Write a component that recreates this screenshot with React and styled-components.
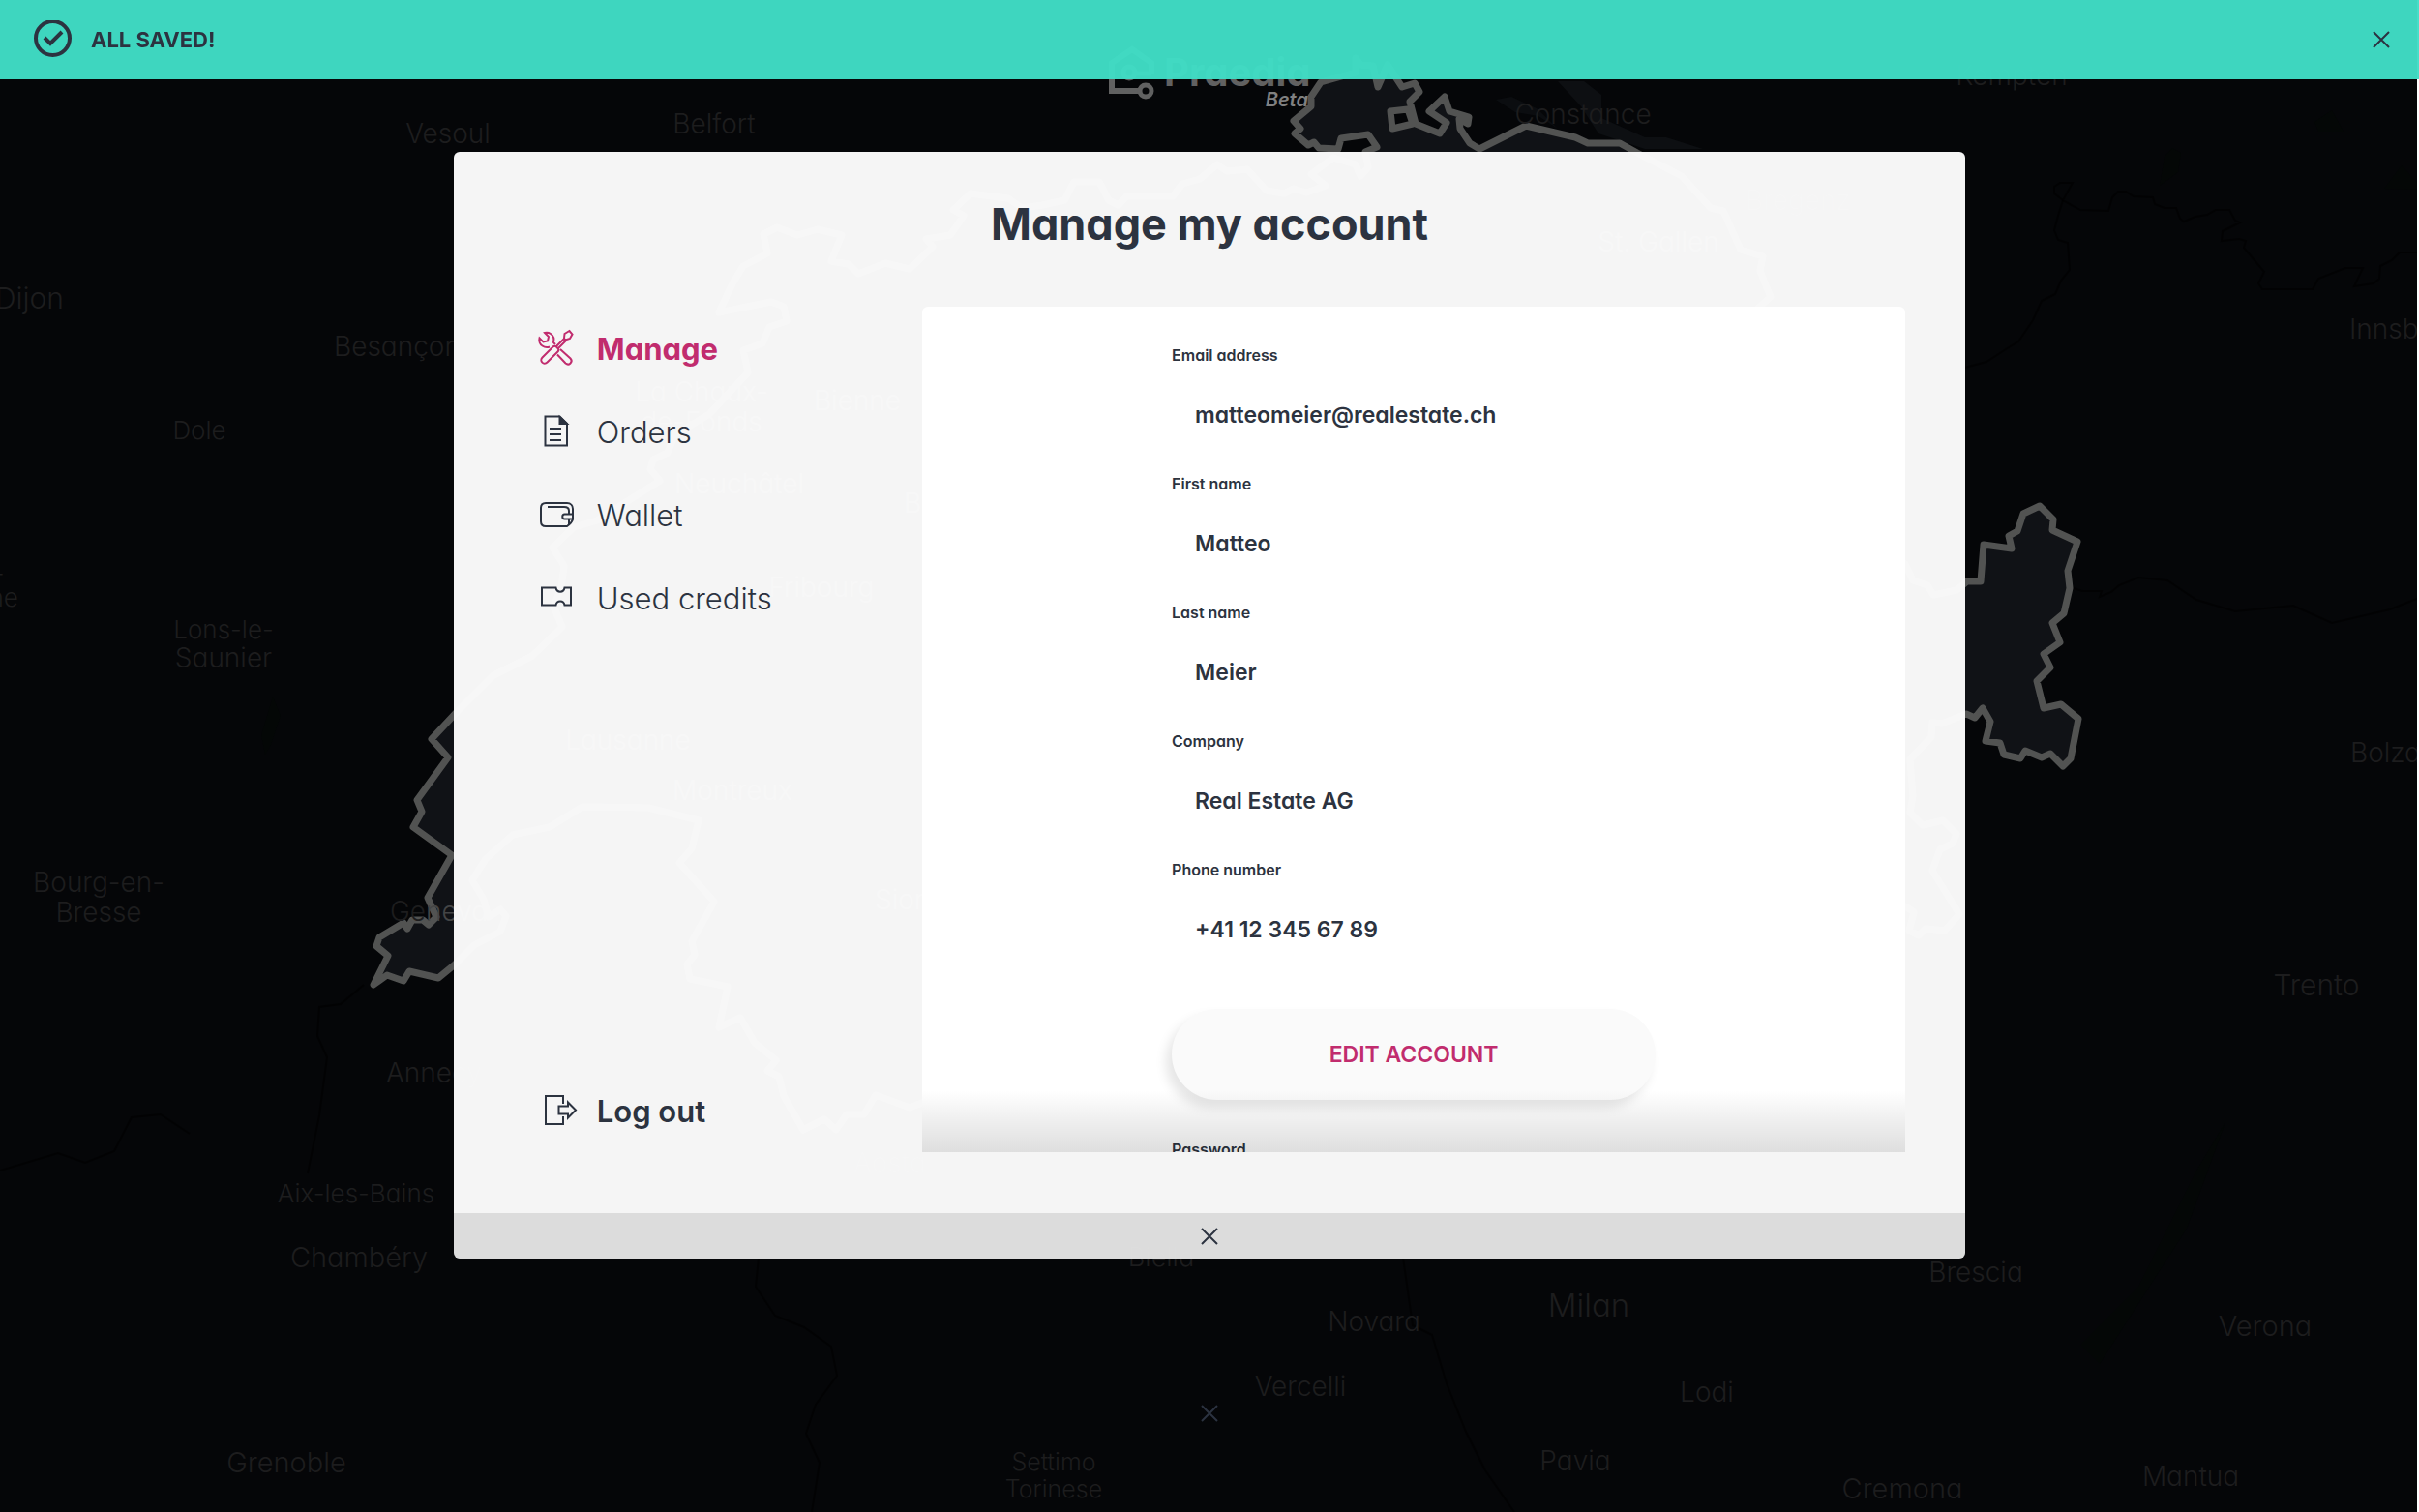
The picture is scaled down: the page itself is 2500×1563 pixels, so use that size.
import React, { useState } from "react";
import styled, { createGlobalStyle, css } from "styled-components";

const FIELDS = [
  { id: "email", label: "Email address", type: "email", value: "matteomeier@realestate.ch" },
  { id: "firstName", label: "First name", type: "text", value: "Matteo" },
  { id: "lastName", label: "Last name", type: "text", value: "Meier" },
  { id: "company", label: "Company", type: "text", value: "Real Estate AG" },
  { id: "phone", label: "Phone number", type: "tel", value: "+41 12 345 67 89" },
];

// [name, x, y, anchor, size]
const CITIES = [
  ["Vesoul", 463, 148],
  ["Belfort", 738, 138],
  ["Constance", 1636, 128],
  ["Kempten", 2079, 88],
  ["Dijon", 66, 319, "end", 30],
  ["Besançon", 345, 368, "start"],
  ["Dole", 206, 454, "middle", 26],
  ["sur-", -20, 602, "middle", 26],
  ["Saône", -20, 627, "middle", 26],
  ["Lons-le-", 231, 660, "middle", 26],
  ["Saunier", 231, 690],
  ["Bourg-en-", 102, 922],
  ["Bresse", 102, 953],
  ["Annecy", 399, 1119, "start"],
  ["Aix-les-Bains", 368, 1243, "middle", 26],
  ["Chambéry", 371, 1310, "middle", 29],
  ["Grenoble", 296, 1522, "middle", 29],
  ["Biella", 1200, 1309, "middle", 27],
  ["Novara", 1420, 1376],
  ["Milan", 1642, 1361, "middle", 33],
  ["Vercelli", 1344, 1443],
  ["Lodi", 1764, 1449],
  ["Pavia", 1628, 1520],
  ["Settimo", 1089, 1520, "middle", 25],
  ["Torinese", 1089, 1548, "middle", 25],
  ["Cremona", 1966, 1549, "middle", 29],
  ["Mantua", 2264, 1536],
  ["Verona", 2341, 1381, "middle", 29],
  ["Brescia", 2042, 1325],
  ["Trento", 2394, 1029, "middle", 30],
  ["Bolzano", 2429, 788, "start"],
  ["Innsbruck", 2428, 350, "start"],
  ["Bregenz", 1804, 217, "start"],
  ["Aosta", 882, 1212, "start"],
];

const SWISS_CITIES = [
  ["La Chaux-", 725, 415],
  ["de-Fonds", 725, 446],
  ["Bienne", 886, 424],
  ["Neuchâtel", 764, 510],
  ["Bern", 934, 530, "start"],
  ["Fribourg", 849, 617],
  ["Lausanne", 649, 775],
  ["Montreux", 757, 827],
  ["Sion", 904, 940, "start"],
  ["St. Gallen", 1714, 260],
];

const SWISS_BORDER =
  "386,1018 401,988 389,978 392,969 417,954 421,960 426,951 437,951 443,956 451,948 442,928 467,884 427,855 436,839 431,827 463,783 446,764 473,735 510,698 550,678 581,648 572,627 580,607 583,585 571,566 593,545 617,538 650,517 682,497 672,485 675,475 690,468 697,450 733,428 773,385 768,362 788,355 795,338 813,332 810,317 797,312 743,323 757,293 768,275 793,262 789,242 803,235 824,243 845,237 870,243 859,270 877,273 887,283 915,272 940,278 964,255 957,247 982,243 996,223 985,217 1003,200 1042,205 1056,215 1077,212 1100,207 1110,188 1136,188 1146,207 1156,212 1164,203 1212,203 1222,190 1240,185 1258,170 1268,177 1289,175 1309,197 1327,200 1337,195 1350,199 1370,192 1355,180 1378,163 1401,170 1406,182 1414,173 1411,157 1423,152 1414,139 1386,143 1383,154 1363,153 1358,147 1352,150 1338,138 1344,133 1337,125 1355,110 1355,100 1365,85 1401,75 1401,60 1406,67 1419,68 1424,90 1434,67 1449,90 1462,86 1467,95 1457,105 1463,128 1488,138 1495,127 1477,115 1493,100 1498,115 1518,121 1517,128 1508,123 1509,133 1519,148 1529,154 1577,130 1628,142 1641,148 1674,148 1692,158 1738,182 1768,215 1781,218 1799,258 1822,265 1819,280 1830,307 1804,330 1830,480 1900,540 1969,583 1977,600 1992,605 1998,615 2022,610 2033,601 2047,601 2050,563 2079,567 2076,554 2085,549 2091,531 2108,523 2122,537 2121,548 2147,560 2137,590 2139,608 2133,634 2121,644 2129,664 2112,676 2119,690 2105,704 2112,732 2130,728 2148,743 2140,784 2132,792 2119,779 2110,783 2093,776 2088,784 2071,780 2067,768 2052,766 2057,746 2049,732 2041,742 2032,738 2007,748 1997,747 1996,762 1974,785 1977,823 1974,840 1987,853 2008,848 2022,862 2018,872 2005,878 1997,900 2025,945 2010,962 1990,960 1983,967 1973,962 1978,943 1969,937 1800,850 1650,880 1500,1100 1300,900 1100,1080 953,1140 940,1145 905,1132 893,1152 875,1152 864,1168 852,1157 830,1168 810,1133 805,1113 793,1107 802,1096 780,1078 765,1052 743,1062 752,1020 713,1012 710,997 718,987 715,973 738,932 702,892 715,877 722,848 670,835 602,834 568,855 530,863 502,888 488,910 500,930 505,948 517,940 523,947 517,963 490,977 470,997 453,1011 423,1004 417,1014 400,1008";

function SwissMap() {
  return (
    <MapSvg viewBox="0 0 2498 1563" preserveAspectRatio="xMidYMin slice" aria-hidden="true">
      <g fill="none" stroke="#000000" strokeOpacity="0.6" strokeWidth="2">
        <path d="M2132 207l-9-7 0-7 6-4h13l-10 18 18 10 29 1 4-14 6-6h8l8 5 20 1 2 7 10 4h12l4 11 4 3 12-5 12-2 9-5h14l6 11 5 2-18 9-1 10 18-2 7 2-2 7 21 25-6 12 4 6h52l6-11 28-11h18l-9 19 20-3 6-5 1-13 12-6 8-8h20" />
        <path d="M2132 207l-5 16-4 15 4 10 10 3 2 28-9 11-6 14-14 7-9 20-15 22-13 8-20 13-30 8" />
        <path d="M2140 607l12 4h20l-2 6 12-5 8-7 20-8 30 3 30 20 40 12 60-6 40 18 60-14 30-12" />
        <path d="M784 1300l-3 30 20 30 30 12 28 20 6 30-22 30-10 30 14 30-8 51" />
        <path d="M1450 1300l10 70 20 10 15 50 20 50 20 40 30 43" />
        <path d="M0 1210l60-18 28 10 30-12 18-35 30-3 30 20" />
        <path d="M376 1018l-24 20-22 3-2 30 10 22-8 60-12 60" />
      </g>
      <g fill="#040706">
        <path d="M2232 192l5-30 8-9 9 5-3 20-8 6z" />
        <path d="M2396 136l-4-10 18-12 12 22z" />
        <path d="M2150 1390l60-60 60-120 30-50-40 110-90 140z" />
        <path d="M2464 195l18-24 16 18v7z" />
        <path d="M282 720l8 20-10 30-6 10-4-20z" />
      </g>
      <polygon points={SWISS_BORDER} fill="#101216" />
      <path fill="#0d0f12" d="M1610 84h27l18 14v24l45 20h22l38 12h-60l-48-16-18-28z" />
      <path fill="#0b0d10" d="M1546 103l16-3 26 12 22 21-20-13-24-4z" />
      <g fill="none" stroke="#525352" strokeWidth="7" strokeLinejoin="round">
        <polygon points={SWISS_BORDER} />
        <polygon points="1437,115 1455,113 1460,128 1439,133" fill="#050608" />
      </g>
      <MapLabels>
        {CITIES.map(([name, x, y, anchor = "middle", size = 28]) => (
          <text key={name} x={x} y={y} textAnchor={anchor} fontSize={size}>
            {name}
          </text>
        ))}
      </MapLabels>
      <MapLabels $bright>
        {SWISS_CITIES.map(([name, x, y, anchor = "middle", size = 28]) => (
          <text key={name} x={x} y={y} textAnchor={anchor} fontSize={size}>
            {name}
          </text>
        ))}
      </MapLabels>
      <MapLabels>
        <text x="403" y="952" fontSize="28">
          Ge<tspan fill="#444546">neva</tspan>
        </text>
      </MapLabels>
      <g fill="none" stroke="#616161" strokeWidth="6">
        <path d="M1190 77V65l-20-14-21 14v29h28" />
        <circle cx="1184" cy="94" r="6" strokeWidth="5" />
        <circle cx="1167" cy="75" r="6" strokeWidth="5" />
        <path d="M1173 76h17" strokeWidth="5" />
      </g>
      <BrandName x="1203" y="89">
        Praedia
      </BrandName>
      <BrandTag x="1352" y="110">
        Beta
      </BrandTag>
    </MapSvg>
  );
}

function CrossIcon() {
  return (
    <svg width="18" height="18" viewBox="0 0 18 18" fill="none" stroke="currentColor" strokeWidth="2">
      <path d="M1 1l16 16M17 1L1 17" />
    </svg>
  );
}

function CheckIcon() {
  return (
    <svg width="40" height="40" viewBox="0 0 40 40" fill="none" stroke="currentColor" strokeWidth="4">
      <circle cx="20.500" cy="18.500" r="17.5" />
      <path d="M12 18l6 6 12-12" />
    </svg>
  );
}

function ToolsIcon() {
  return (
    <IconSvg viewBox="0 0 40 40">
      <path d="M20 18l8.500-8.500M22 20l8.500-8.500M28 9.500l.5-4.500 5-3 3 3.500-2.500 4.500-5 1.500z" />
      <path d="M20 18.500c-1-1-2.500-1-3.500 0L5.500 29.500c-3.500 3.500 1.500 8.500 5 5L21.500 23.500c1-1 1-2.500 0-3.500z" />
      <path d="M19 16l-2-2c1-3.500 0-7-3-9-2-1.300-4-1.500-6-1l4 4-1 4.500-4.500 1-4-4c-.8 3 .5 6.500 3 8 2.500 1.800 5 2 7.500 1" />
      <path d="M24 21l10.500 9.500c3.200 3.500-1.500 8-5 5L21 26.500" />
    </IconSvg>
  );
}

function OrdersIcon() {
  return (
    <IconSvg viewBox="0 0 40 40">
      <path d="M8.500 4.500h15l7.500 7.500v22.500H8.500z" />
      <path d="M23.500 5v7H31z" fill="currentColor" />
      <path d="M13 17h12M13 23h12M13 29h12" />
    </IconSvg>
  );
}

function WalletIcon() {
  return (
    <IconSvg viewBox="0 0 40 40">
      <path d="M9 8h22c4 0 6 3 6 6v11c-1 3-3 5-6 7H9c-3 0-5-2-5-5V13c0-3 2-5 5-5z" />
      <path d="M11 12h17c3 0 5 1.500 5 4v3.500M37 19.500h-8.500c-3 0-3 5 0 5H37M33 25v5" />
    </IconSvg>
  );
}

function TicketIcon() {
  return (
    <IconSvg viewBox="0 0 40 40">
      <path d="M5 9.500h14.500c1 5.500 8 5.500 9 0h6.500v18h-6.500c-1-5.500-8-5.500-9 0H5z" />
    </IconSvg>
  );
}

function LogoutIcon() {
  return (
    <IconSvg viewBox="0 0 40 40">
      <path d="M27 13V5H9v29h18v-8" />
      <path d="M22.500 15.500H32v-4l8 8-8 8v-4h-9.500z" />
    </IconSvg>
  );
}

const NAV = [
  { id: "manage", label: "Manage", icon: <ToolsIcon /> },
  { id: "orders", label: "Orders", icon: <OrdersIcon /> },
  { id: "wallet", label: "Wallet", icon: <WalletIcon /> },
  { id: "credits", label: "Used credits", icon: <TicketIcon /> },
];

function App() {
  const [toastOpen, setToastOpen] = useState(true);
  const [active, setActive] = useState("manage");

  return (
    <>
      <GlobalStyle />
      <Page>
        <SwissMap />
        {toastOpen && (
          <Toast role="status">
            <CheckIcon />
            <ToastText>ALL SAVED!</ToastText>
            <IconButton aria-label="Dismiss message" onClick={() => setToastOpen(false)}>
              <CrossIcon />
            </IconButton>
          </Toast>
        )}
        <Modal role="dialog" aria-labelledby="account-title">
          <Title id="account-title">Manage my account</Title>
          <Body>
            <Nav>
              {NAV.map((item) => (
                <NavLink
                  key={item.id}
                  href={`#${item.id}`}
                  $active={item.id === active}
                  onClick={() => setActive(item.id)}
                >
                  {item.icon}
                  {item.label}
                </NavLink>
              ))}
              <LogoutButton>
                <LogoutIcon />
                Log out
              </LogoutButton>
            </Nav>
            <Panel>
              <Scroller>
                <Form onSubmit={(e) => e.preventDefault()}>
                  {FIELDS.map((field) => (
                    <Field key={field.id}>
                      <Label htmlFor={field.id}>{field.label}</Label>
                      <Input id={field.id} type={field.type} defaultValue={field.value} readOnly />
                    </Field>
                  ))}
                  <EditButton>EDIT ACCOUNT</EditButton>
                  <Field>
                    <Label htmlFor="password">Password</Label>
                    <Input id="password" type="password" readOnly />
                  </Field>
                </Form>
              </Scroller>
              <Fade />
            </Panel>
          </Body>
          <ModalFooter aria-label="Close">
            <CrossIcon />
          </ModalFooter>
        </Modal>
        <BackButton aria-label="Close map panel">
          <CrossIcon />
        </BackButton>
      </Page>
    </>
  );
}

export default App;

const GlobalStyle = createGlobalStyle`
  * {
    box-sizing: border-box;
  }
  body {
    margin: 0;
    background: #ffffff;
    color: #2c3340;
    font-family: Inter, "Open Sans", sans-serif;
    font-feature-settings: "cv11";
  }
  button, input {
    font: inherit;
    font-feature-settings: inherit;
    color: inherit;
    border: 0;
    padding: 0;
    background: none;
  }
  button {
    cursor: pointer;
  }
`;

const Page = styled.div`
  position: relative;
  isolation: isolate;
  display: flex;
  flex-direction: column;
  align-items: center;
  min-height: 100vh;
  padding-top: 157px;
`;

// MAP STYLING
const MapSvg = styled.svg`
  position: absolute;
  inset: 0;
  z-index: -1;
  width: calc(100% - 2px);
  height: 100%;
  background: #050608;
`;
const MapLabels = styled.g`
  fill: ${(props) => (props.$bright ? "#4c4c4c" : "#1d1d1e")};
  font-weight: 300;
`;
const BrandName = styled.text`
  fill: #616161;
  font-size: 40px;
  font-weight: 700;
`;
const BrandTag = styled.text`
  fill: #808080;
  font-size: 20px;
  font-weight: 600;
  font-style: italic;
  text-anchor: end;
`;

// TOAST STYLING
const Toast = styled.div`
  position: fixed;
  top: 0;
  left: 0;
  right: 0;
  z-index: 2;
  display: flex;
  align-items: center;
  gap: 20px;
  height: 82px;
  padding: 0 30px 0 34px;
  background: rgba(64, 221, 197, 0.97);
`;
const ToastText = styled.span`
  flex: 1;
  font-size: 22px;
  font-weight: 700;
`;
const IconButton = styled.button`
  display: flex;
`;

// MODAL STYLING
const Modal = styled.div`
  display: flex;
  flex-direction: column;
  width: 62.5%;
  border-radius: 6px;
  overflow: hidden;
  background: rgba(253, 253, 253, 0.97);
`;
const Title = styled.h1`
  margin: 47px 0 57px;
  font-size: 45px;
  line-height: 56px;
  font-weight: 700;
  text-align: center;
`;
const Body = styled.div`
  display: grid;
  grid-template-columns: 121fr 254fr;
  padding: 0 62px 63px 0;
`;

// NAVIGATION STYLING
const IconSvg = styled.svg`
  width: 40px;
  height: 40px;
  fill: none;
  stroke: currentColor;
  stroke-width: 2;
  overflow: visible;
`;
const Nav = styled.nav`
  display: flex;
  flex-direction: column;
  padding-left: 86px;
`;
const navItem = css`
  display: flex;
  align-items: center;
  gap: 22px;
  height: 86px;
  font-size: 31px;
`;
const NavLink = styled.a`
  ${navItem}
  color: ${(props) => (props.$active ? "#c12c6e" : "#2c3340")};
  font-weight: ${(props) => (props.$active ? 700 : 300)};
  text-decoration: none;
`;
const LogoutButton = styled.button`
  ${navItem}
  margin-top: auto;
  font-weight: 600;
`;

// ACCOUNT PANEL STYLING
const Panel = styled.div`
  position: relative;
  height: calc(100vh - 689px);
  border-radius: 6px 6px 0 0;
  overflow: hidden;
  background: #ffffff;
`;
const Scroller = styled.div`
  height: 100%;
  overflow-y: auto;
  scrollbar-width: none;
`;
const Form = styled.form`
  display: flex;
  flex-direction: column;
  gap: 29px;
  width: 500px;
  margin: 0 auto;
  padding: 38px 0;
`;
const Field = styled.div`
  display: flex;
  flex-direction: column;
  gap: 20px;
`;
const Label = styled.label`
  font-size: 16px;
  line-height: 24px;
  font-weight: 600;
`;
const Input = styled.input`
  height: 60px;
  padding: 0 24px;
  font-size: 23px;
  font-weight: 600;
  outline: none;
`;
const EditButton = styled.button`
  height: 94px;
  margin: 23px 0 10px;
  border-radius: 47px;
  background: #fafafa;
  box-shadow: -6px 8px 12px rgba(0, 0, 0, 0.1);
  color: #c12c6e;
  font-size: 23px;
  font-weight: 600;
`;
const Fade = styled.div`
  position: absolute;
  left: 0;
  right: 0;
  bottom: 0;
  height: 64px;
  background: linear-gradient(rgba(0, 0, 0, 0), rgba(0, 0, 0, 0.13));
  pointer-events: none;
`;

const ModalFooter = styled.button`
  display: flex;
  align-items: center;
  justify-content: center;
  height: 47px;
  background: rgba(0, 0, 0, 0.1);
`;
const BackButton = styled.button`
  display: flex;
  margin-top: 151px;
`;
